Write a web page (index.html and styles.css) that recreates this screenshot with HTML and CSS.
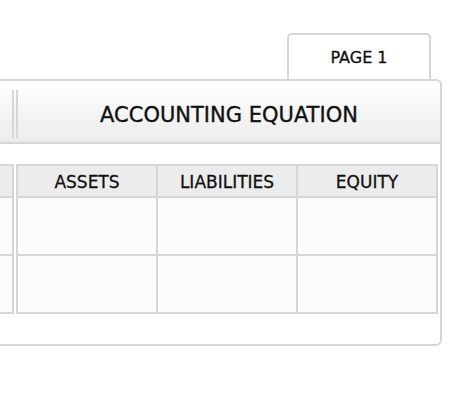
FILE: index.html
```html
<!DOCTYPE html>
<html>
<head>
<meta charset="utf-8">
<link rel="stylesheet" href="styles.css">
</head>
<body>
<div class="page">
  <div class="tabs">
    <div class="tab">PAGE 1</div>
  </div>
  <div class="panel">
    <div class="panel-head">
      <div class="head-cell head-prev"></div>
      <div class="head-cell head-main">ACCOUNTING EQUATION</div>
    </div>
    <div class="tables">
      <div class="grid grid-prev">
        <div class="th"></div>
        <div class="td"></div>
        <div class="td"></div>
      </div>
      <div class="grid grid-main">
        <div class="th">ASSETS</div>
        <div class="th">LIABILITIES</div>
        <div class="th">EQUITY</div>
        <div class="td"></div>
        <div class="td"></div>
        <div class="td"></div>
        <div class="td"></div>
        <div class="td"></div>
        <div class="td"></div>
      </div>
    </div>
  </div>
</div>
</body>
</html>
```

FILE: styles.css
```css
html, body {
  margin: 0;
  padding: 0;
  background: #ffffff;
}

body {
  font-family: "DejaVu Sans", Verdana, sans-serif;
  color: #111111;
  width: 450px;
  overflow: hidden;
}

.page {
  padding-top: 33px;
}

.tabs {
  display: flex;
  justify-content: flex-end;
  padding-right: 19px;
}

.tab {
  box-sizing: border-box;
  width: 144px;
  height: 46px;
  border: 2px solid #d6d6d6;
  border-bottom: none;
  border-radius: 5px 5px 0 0;
  background: #ffffff;
  font-size: 16px;
  -webkit-text-stroke: 0.3px #111111;
  display: flex;
  align-items: center;
  justify-content: center;
  padding-top: 1px;
}

.panel {
  margin-left: -130px;
  width: 572px;
  box-sizing: border-box;
  border: 2px solid #d6d6d6;
  border-radius: 6px;
  height: 267px;
}

.panel-head {
  display: flex;
  gap: 2px;
  height: 63px;
  box-sizing: border-box;
  padding: 9px 0 4px 0;
  border-bottom: 2px solid #d6d6d6;
  background: linear-gradient(#ffffff, #ececec);
  border-radius: 4px 4px 0 0;
}

.head-cell {
  box-sizing: border-box;
  border-left: 2px solid #d6d6d6;
  border-right: 2px solid #d6d6d6;
}

.head-prev {
  width: 142px;
  flex: none;
}

.head-main {
  flex: 1;
  border-right: none;
  display: flex;
  align-items: center;
  justify-content: center;
  font-size: 21px;
  -webkit-text-stroke: 0.35px #111111;
  padding-top: 1px;
}

.tables {
  display: flex;
  gap: 2px;
  margin-top: 20px;
}

.grid {
  display: grid;
  gap: 2px;
  padding: 2px;
  background: #d6d6d6;
  grid-template-rows: 30px 56px 56px;
}

.grid-prev {
  grid-template-columns: 138px;
}

.grid-main {
  grid-template-columns: repeat(3, 138px);
}

.th {
  background: #ececec;
  font-size: 17px;
  -webkit-text-stroke: 0.3px #111111;
  display: flex;
  align-items: center;
  justify-content: center;
  padding-top: 2px;
}

.td {
  background: #fcfcfc;
}
```
